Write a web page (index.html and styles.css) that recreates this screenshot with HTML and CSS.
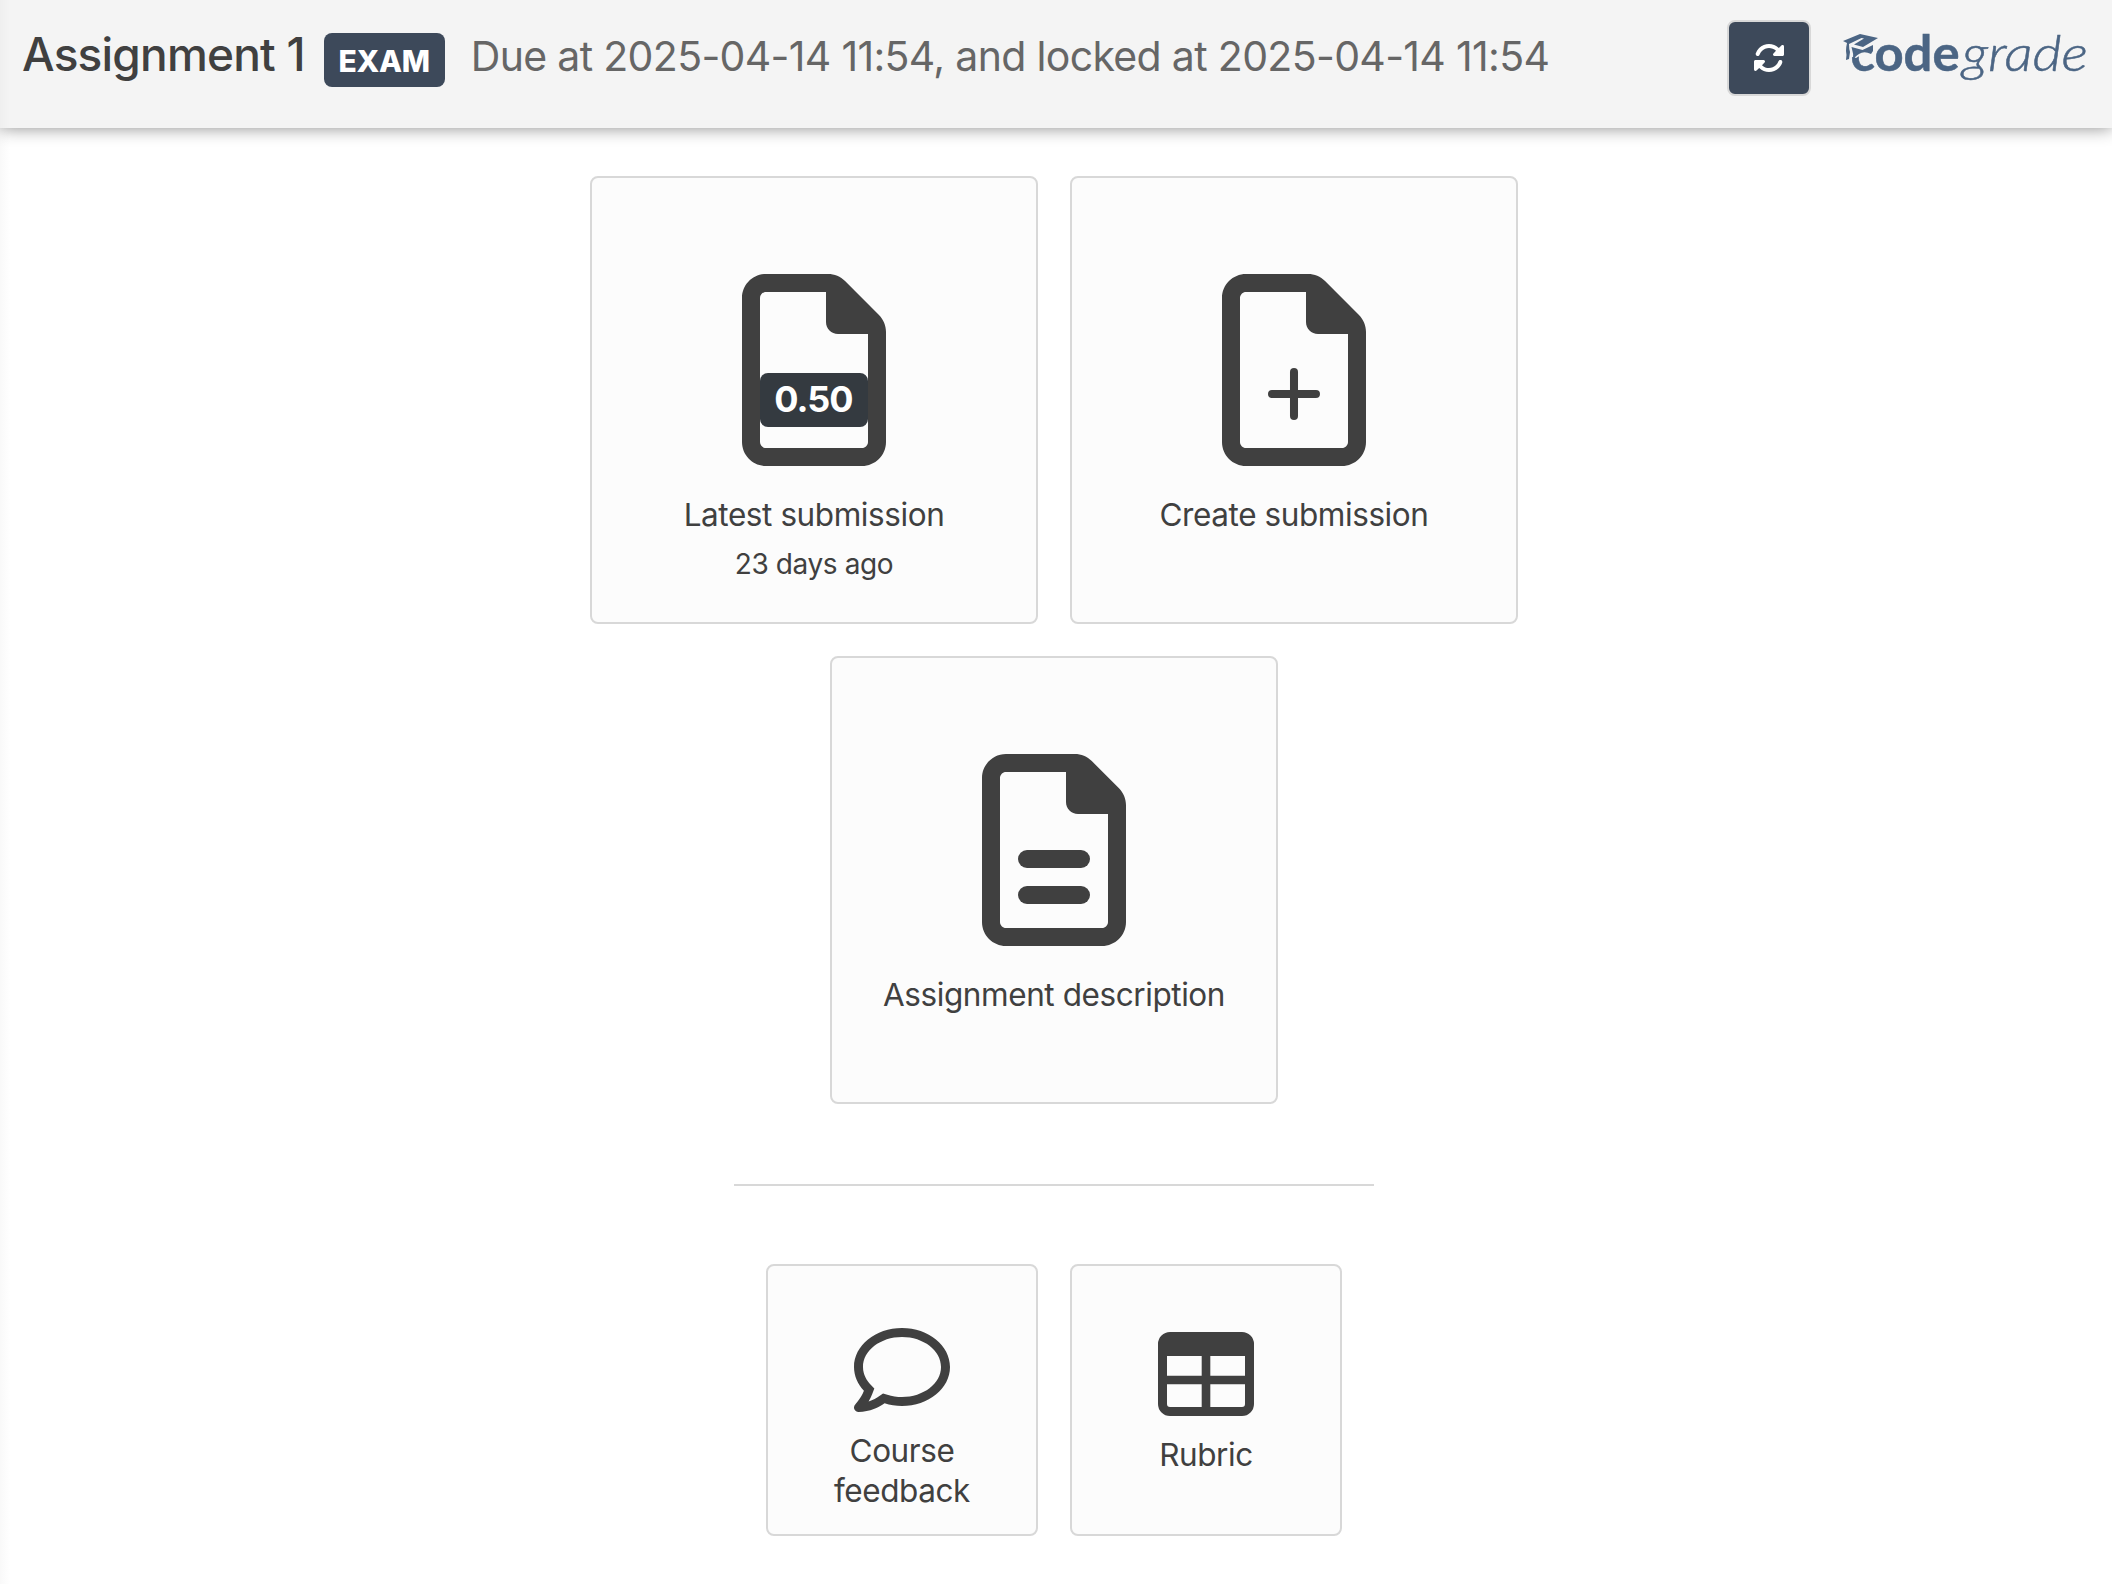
FILE: index.html
```html
<!DOCTYPE html>
<html lang="en">
<head>
<meta charset="utf-8">
<title>Assignment 1</title>
<link rel="stylesheet" href="styles.css">
</head>
<body>
<header class="topbar">
  <h1 class="title">Assignment 1</h1>
  <span class="badge">EXAM</span>
  <span class="deadline">Due at 2025-04-14 11:54, and locked at 2025-04-14 11:54</span>
  <button class="refresh" aria-label="Refresh">
    <svg width="32" height="32" viewBox="0 0 512 512"><path d="M142.9 142.9c62.2-62.2 162.7-62.5 225.3-1L327 183c-6.9 6.9-8.9 17.2-5.2 26.2s12.5 14.8 22.2 14.8H472c13.3 0 24-10.7 24-24V72c0-9.7-5.8-18.5-14.8-22.2s-19.3-1.7-26.2 5.2L413.4 96.6c-87.6-86.5-228.7-86.2-315.8 1C73.2 122 55.6 150.7 44.8 181.4c-5.9 16.7 2.9 34.9 19.5 40.8s34.9-2.9 40.8-19.5c7.7-21.8 20.2-42.3 37.8-59.8zM16 312V440c0 9.7 5.8 18.5 14.8 22.2s19.3 1.7 26.2-5.2l41.6-41.6c87.6 86.5 228.7 86.2 315.8-1c24.4-24.4 42.1-53.1 52.9-83.7c5.9-16.7-2.9-34.9-19.5-40.8s-34.9 2.9-40.8 19.5c-7.7 21.8-20.2 42.3-37.8 59.8c-62.2 62.2-162.7 62.5-225.3 1L185 329c6.9-6.9 8.9-17.2 5.2-26.2s-12.5-14.8-22.2-14.8H40c-13.3 0-24 10.7-24 24z"/></svg>
  </button>
  <svg class="logo" width="244" height="56" viewBox="0 0 244 56">
    <text class="logo-code" x="6.5" y="40.5" textLength="109" lengthAdjust="spacingAndGlyphs">code</text>
    <text class="logo-grade" x="118" y="40.5" textLength="126" lengthAdjust="spacingAndGlyphs">grade</text>
    <path class="logo-gap" d="M2 12L36 8V18L30 23L22 22L12 28L5 26Z"/>
    <path d="M-1 11L16 4L34 8L19 17L10 14.5L20 8.5L17.500 8L5 14Q5 19 6 22L5 29L2 30Q3 25 2 21Q2 17 3 13Z"/>
    <path d="M7.500 17L18.500 20L29 15V21L27 24Q20 20.500 15 24Q11 26 9 31Q10 24 7.500 17Z"/>
  </svg>
</header>
<main class="content">
  <section class="cards">
    <a class="card">
      <span class="file-icon">
        <svg width="144" height="192" viewBox="0 0 384 512"><path d="M320 464c8.8 0 16-7.2 16-16V160H256c-17.7 0-32-14.3-32-32V48H64c-8.8 0-16 7.2-16 16V448c0 8.8 7.2 16 16 16H320zM0 64C0 28.7 28.7 0 64 0H229.5c17 0 33.3 6.7 45.3 18.7l90.5 90.5c12 12 18.7 28.3 18.7 45.3V448c0 35.3-28.7 64-64 64H64c-35.3 0-64-28.7-64-64V64z"/></svg>
        <span class="grade">0.50</span>
      </span>
      <span class="label">Latest submission</span>
      <span class="age">23 days ago</span>
    </a>
    <a class="card">
      <svg width="144" height="192" viewBox="0 0 384 512"><path d="M320 464c8.8 0 16-7.2 16-16V160H256c-17.7 0-32-14.3-32-32V48H64c-8.8 0-16 7.2-16 16V448c0 8.8 7.2 16 16 16H320zM0 64C0 28.7 28.7 0 64 0H229.5c17 0 33.3 6.7 45.3 18.7l90.5 90.5c12 12 18.7 28.3 18.7 45.3V448c0 35.3-28.7 64-64 64H64c-35.3 0-64-28.7-64-64V64z"/><rect x="122.7" y="309.3" width="138.6" height="21.4" rx="10.7"/><rect x="181.3" y="250.7" width="21.4" height="138.6" rx="10.7"/></svg>
      <span class="label">Create submission</span>
    </a>
    <a class="card">
      <svg width="144" height="192" viewBox="0 0 384 512"><path d="M320 464c8.8 0 16-7.2 16-16V160H256c-17.7 0-32-14.3-32-32V48H64c-8.8 0-16 7.2-16 16V448c0 8.8 7.2 16 16 16H320zM0 64C0 28.7 28.7 0 64 0H247.4c17 0 33.3 6.7 45.3 18.7l72.6 72.6c12 12 18.7 28.3 18.7 45.3V448c0 35.3-28.7 64-64 64H64c-35.3 0-64-28.7-64-64V64z"/><rect x="96" y="256" width="192" height="48" rx="24"/><rect x="96" y="352" width="192" height="48" rx="24"/></svg>
      <span class="label">Assignment description</span>
    </a>
  </section>
  <hr class="divider">
  <section class="cards">
    <a class="card small">
      <svg width="96" height="84" viewBox="0 32 512 448"><path d="M256 32C114.6 32 0 125.1 0 240c0 47.6 19.9 91.2 52.9 126.3C38 405.7 7 439.1 6.5 439.5c-6.6 7-8.4 17.2-4.6 26S14.4 480 24 480c61.5 0 110-25.7 139.1-46.3C192 442.8 223.2 448 256 448c141.4 0 256-93.1 256-208S397.4 32 256 32zm0 368c-26.7 0-53.1-4.1-78.4-12.1l-22.7-7.2-19.5 13.8c-14.3 10.1-33.9 21.4-57.5 29 7.3-12.1 14.4-25.7 19.9-40.2l10.6-28.1-20.6-21.8C69.7 314.1 48 282.2 48 240c0-88.2 93.3-160 208-160s208 71.8 208 160-93.3 160-208 160z"/></svg>
      <span class="label">Course feedback</span>
    </a>
    <a class="card small rubric">
      <svg width="96" height="84" viewBox="0 0 512 448"><path fill-rule="evenodd" d="M64 0H448A64 64 0 0 1 512 64V384A64 64 0 0 1 448 448H64A64 64 0 0 1 0 384V64A64 64 0 0 1 64 0ZM48 128V233H233V128ZM279 128V233H464V128ZM48 278V384A16 16 0 0 0 64 400H233V278ZM279 278V400H448A16 16 0 0 0 464 384V278Z"/></svg>
      <span class="label">Rubric</span>
    </a>
  </section>
</main>
</body>
</html>
```
FILE: styles.css
```css
* { box-sizing: border-box; }
body {
  margin: 0;
  min-height: 1584px;
  background: linear-gradient(90deg, #f9f9f9, #fff 10px);
  color: #404040;
  font-family: Inter, "Liberation Sans", sans-serif;
}
.topbar {
  display: flex;
  align-items: flex-start;
  height: 128px;
  padding: 20px 24px 0 22px;
  background: linear-gradient(90deg, #efefef, #f4f4f4 10px);
  box-shadow: 0 0 16px rgba(0, 0, 0, .46);
  white-space: nowrap;
}
.title {
  margin: 0;
  font-size: 46px;
  line-height: 69px;
  font-weight: 500;
  letter-spacing: -.8px;
}
.badge {
  height: 54px;
  width: 121px;
  margin: 13px 0 0 19px;
  border-radius: 8px;
  background: #3d495a;
  color: #fff;
  font-size: 30px;
  line-height: 56px;
  font-weight: 800;
  letter-spacing: -.3px;
  text-align: center;
}
.deadline {
  margin-left: 26px;
  color: #666;
  font-size: 41px;
  line-height: 72px;
  letter-spacing: -.67px;
}
.refresh {
  display: flex;
  align-items: center;
  justify-content: center;
  width: 84px;
  height: 76px;
  margin-left: auto;
  padding: 0;
  border: 2px solid #d8d8d8;
  border-radius: 8px;
  background: #3d495a;
  fill: #fff;
}
.logo {
  margin: 10px 0 0 33px;
  fill: #4b6584;
  overflow: visible;
}
.logo-code { font: 700 49px Lato, sans-serif; stroke: #4b6584; stroke-width: .5px; }
.logo-grade { font: italic 300 49px Lato, sans-serif; stroke: #4b6584; stroke-width: .5px; }
.logo-gap { fill: #f4f4f4; }
.content {
  padding: 48px 4px 0 0;
}
.cards {
  display: flex;
  flex-wrap: wrap;
  justify-content: center;
  gap: 32px;
  width: 960px;
  margin: 0 auto;
}
.card {
  display: flex;
  flex-direction: column;
  align-items: center;
  width: 448px;
  height: 448px;
  padding-top: 96px;
  border: 2px solid #d8d8d8;
  border-radius: 8px;
  background: #fcfcfc;
  fill: #404040;
}
.file-icon { position: relative; height: 192px; }
.grade {
  position: absolute;
  left: 18px;
  top: 99px;
  width: 108px;
  height: 54px;
  padding-right: 1px;
  border-radius: 8px;
  background: #343a40;
  color: #fff;
  font-size: 36px;
  line-height: 53px;
  font-weight: 700;
  letter-spacing: -1px;
  text-align: center;
}
.label {
  margin-top: 29px;
  font-size: 31.5px;
  line-height: 40px;
  letter-spacing: -.42px;
  text-align: center;
}
.age {
  margin-top: 11px;
  font-size: 28px;
  line-height: 36px;
  letter-spacing: -.4px;
}
.divider {
  width: 640px;
  height: 2px;
  margin: 80px auto 78px;
  border: 0;
  background: #d8d8d8;
}
.small {
  width: 272px;
  height: 272px;
  padding: 62px 40px 0;
}
.small .label { margin-top: 19px; }
.rubric { padding-top: 66px; }
```
